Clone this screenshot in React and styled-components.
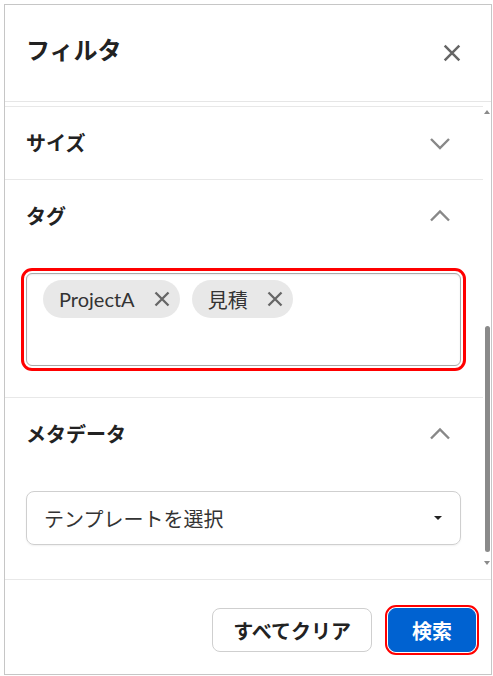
import styled, {createGlobalStyle} from 'styled-components'

const GlobalStyle = createGlobalStyle`
  html, body {
    margin: 0;
    padding: 0;
    background: #fff;
  }
  body {
    font-family: Lato, "Noto Sans CJK JP", sans-serif;
    color: #222;
  }
`

const Dialog = styled.div`
  margin: 4px;
  width: 488px;
  height: 671px;
  box-sizing: border-box;
  border: 1px solid #c6c6c6;
  background: #fff;
  display: flex;
  flex-direction: column;
`

const Header = styled.header`
  height: 97px;
  flex-shrink: 0;
  box-sizing: border-box;
  display: flex;
  align-items: center;
  justify-content: space-between;
  padding: 0 21px;
  border-bottom: 1px solid #e6e6e6;
`

const Title = styled.h1`
  margin: 0 0 10px;
  font-size: 24px;
  font-weight: 700;
  color: #222;
`

const IconButton = styled.button`
  border: none;
  background: transparent;
  padding: 0;
  width: ${props => props.size || 36}px;
  height: 36px;
  display: flex;
  align-items: center;
  justify-content: center;
  color: ${props => props.color || '#666'};
  cursor: pointer;
`

const ScrollArea = styled.div`
  flex: 1;
  min-height: 0;
  display: flex;
`

const ScrollContent = styled.div`
  flex: 1;
  min-width: 0;
  padding-top: 4px;
`

const ScrollTrack = styled.div`
  width: 8px;
  flex-shrink: 0;
  box-sizing: border-box;
  padding: 8px 0 14px;
  display: flex;
  flex-direction: column;
  align-items: center;
`

const Arrow = styled.span`
  width: 0;
  height: 0;
  border-left: 3px solid transparent;
  border-right: 3px solid transparent;
  ${props => props.down ? 'border-top: 4px solid #8a8a8a;' : 'border-bottom: 4px solid #8a8a8a;'}
`

const Thumb = styled.div`
  margin: auto 0 9px;
  width: 5px;
  height: 226px;
  border-radius: 3px;
  background: #8a8a8a;
`

const Section = styled.section`
  border-top: ${props => props.first ? '1px solid #e8e8e8' : 'none'};
  border-bottom: ${props => props.last ? 'none' : '1px solid #e8e8e8'};
`

const SectionHeader = styled.div`
  height: 72px;
  display: flex;
  align-items: center;
  justify-content: space-between;
  padding: 0 21px;
`

const SectionTitle = styled.h2`
  margin: 0 0 2px;
  font-size: 20px;
  font-weight: 700;
  color: #222;
`

const SectionBody = styled.div`
  padding: 21px 22px ${props => props.bottom || 31}px 21px;
`

const TagInput = styled.div`
  box-sizing: border-box;
  min-height: 93px;
  border: 1px solid #a9a9a9;
  border-radius: 6px;
  padding: 6px 16px;
  display: flex;
  flex-wrap: wrap;
  align-content: flex-start;
  gap: 12px;
  outline: 3px solid #f00;
  outline-offset: 2px;
  box-shadow: inset 0 1px 2px rgba(0, 0, 0, 0.08);
`

const Chip = styled.span`
  height: 38px;
  display: inline-flex;
  align-items: center;
  gap: 19px;
  padding: 0 10px 0 16px;
  border-radius: 19px;
  background: #e8e8e8;
  color: #333;
  font-size: 20px;
`

const ChipRemove = styled.span`
  display: flex;
  color: #666;
`

const Select = styled.div`
  box-sizing: border-box;
  height: 54px;
  border: 1px solid #cfcfcf;
  border-radius: 8px;
  padding: 0 18px 0 17px;
  display: flex;
  align-items: center;
  justify-content: space-between;
  font-size: 20px;
  color: #333;
  box-shadow: 0 1px 2px rgba(0, 0, 0, 0.06);
`

const Caret = styled.span`
  width: 0;
  height: 0;
  border-left: 4px solid transparent;
  border-right: 4px solid transparent;
  border-top: 4px solid #222;
`

const Footer = styled.footer`
  height: 95px;
  flex-shrink: 0;
  box-sizing: border-box;
  border-top: 1px solid #e8e8e8;
  display: flex;
  justify-content: flex-end;
  align-items: flex-start;
  gap: 16px;
  padding: 28px 15px 0;
`

const Button = styled.button`
  height: 44px;
  box-sizing: border-box;
  padding: 0 ${props => props.primary ? 23 : 20}px;
  border-radius: 8px;
  font-family: Lato, "Noto Sans CJK JP", sans-serif;
  font-size: 20px;
  font-weight: 700;
  border: 1px solid ${props => props.primary ? '#0062d1' : '#cfcfcf'};
  background: ${props => props.primary ? '#0062d1' : '#fff'};
  color: ${props => props.primary ? '#fff' : '#222'};
  outline: ${props => props.primary ? '2px solid #f00' : 'none'};
  outline-offset: 1px;
  cursor: pointer;
`

const Chevron = ({up}) => (
  <svg width="24" height="24" viewBox="0 0 24 24" fill="none" stroke="currentColor" strokeWidth="2.4">
    <path d={up ? 'M3 16.5l9-9 9 9' : 'M3 8l9 9 9-9'} />
  </svg>
)

const Cross = ({size, stroke}) => (
  <svg width={size} height={size} viewBox="0 0 16 16" fill="none" stroke="currentColor" strokeWidth={stroke}>
    <path d="M1.5 1.5l13 13M14.5 1.5l-13 13" />
  </svg>
)

const tags = ['ProjectA', '見積']

const App = () => {
    return (
        <>
            <GlobalStyle />
            <Dialog>
                <Header>
                    <Title>フィルタ</Title>
                    <IconButton aria-label="閉じる">
                        <Cross size={18} stroke={2.2} />
                    </IconButton>
                </Header>
                <ScrollArea>
                    <ScrollContent>
                        <Section first>
                            <SectionHeader>
                                <SectionTitle>サイズ</SectionTitle>
                                <IconButton size={44} color="#888"><Chevron /></IconButton>
                            </SectionHeader>
                        </Section>
                        <Section>
                            <SectionHeader>
                                <SectionTitle>タグ</SectionTitle>
                                <IconButton size={44} color="#888"><Chevron up /></IconButton>
                            </SectionHeader>
                            <SectionBody bottom={31}>
                                <TagInput>
                                    {tags.map(tag => (
                                        <Chip key={tag}>
                                            {tag}
                                            <ChipRemove><Cross size={16} stroke={2.3} /></ChipRemove>
                                        </Chip>
                                    ))}
                                </TagInput>
                            </SectionBody>
                        </Section>
                        <Section last>
                            <SectionHeader>
                                <SectionTitle>メタデータ</SectionTitle>
                                <IconButton size={44} color="#888"><Chevron up /></IconButton>
                            </SectionHeader>
                            <SectionBody bottom={33}>
                                <Select>
                                    テンプレートを選択
                                    <Caret />
                                </Select>
                            </SectionBody>
                        </Section>
                    </ScrollContent>
                    <ScrollTrack>
                        <Arrow />
                        <Thumb />
                        <Arrow down />
                    </ScrollTrack>
                </ScrollArea>
                <Footer>
                    <Button>すべてクリア</Button>
                    <Button primary>検索</Button>
                </Footer>
            </Dialog>
        </>
    )
}

export default App
